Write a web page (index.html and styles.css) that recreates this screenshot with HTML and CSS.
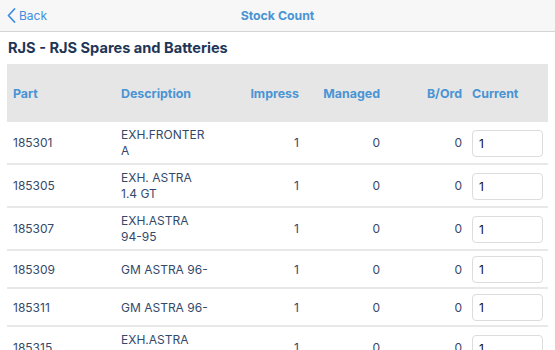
FILE: index.html
```html
<!DOCTYPE html>
<html lang="en">
<head>
  <meta charset="UTF-8">
  <title>Stock Count</title>
  <meta name="viewport" content="width=device-width, initial-scale=1.0">
  <link rel="stylesheet" href="styles.css">
</head>
<body>

<div class="navbar">
  <a href="#" class="back">
    <svg width="9" height="15" viewBox="0 0 9 15"><path d="M7.5 1 L1.5 7.5 L7.5 14" fill="none" stroke="#3f8ee0" stroke-width="1.8" stroke-linecap="round" stroke-linejoin="round"/></svg>
    <span>Back</span>
  </a>
  <div class="title">Stock Count</div>
  <div></div>
</div>

<h2 class="supplier">RJS - RJS Spares and Batteries</h2>

<div class="table-wrap">
  <table class="stock">
    <colgroup>
      <col class="c-part">
      <col class="c-desc">
      <col class="c-impress">
      <col class="c-managed">
      <col class="c-bord">
      <col class="c-current">
    </colgroup>
    <thead>
      <tr>
        <th>Part</th>
        <th>Description</th>
        <th class="num">Impress</th>
        <th class="num">Managed</th>
        <th class="num">B/Ord</th>
        <th class="cur">Current</th>
      </tr>
    </thead>
    <tbody>
      <tr>
        <td>185301</td>
        <td class="desc">EXH.FRONTERA</td>
        <td class="num">1</td>
        <td class="num">0</td>
        <td class="num">0</td>
        <td class="cur"><input type="text" value="1"></td>
      </tr>
      <tr>
        <td>185305</td>
        <td class="desc">EXH. ASTRA 1.4 GT</td>
        <td class="num">1</td>
        <td class="num">0</td>
        <td class="num">0</td>
        <td class="cur"><input type="text" value="1"></td>
      </tr>
      <tr>
        <td>185307</td>
        <td class="desc">EXH.ASTRA 94-95</td>
        <td class="num">1</td>
        <td class="num">0</td>
        <td class="num">0</td>
        <td class="cur"><input type="text" value="1"></td>
      </tr>
      <tr>
        <td>185309</td>
        <td class="desc">GM ASTRA 96-</td>
        <td class="num">1</td>
        <td class="num">0</td>
        <td class="num">0</td>
        <td class="cur"><input type="text" value="1"></td>
      </tr>
      <tr>
        <td>185311</td>
        <td class="desc">GM ASTRA 96-</td>
        <td class="num">1</td>
        <td class="num">0</td>
        <td class="num">0</td>
        <td class="cur"><input type="text" value="1"></td>
      </tr>
      <tr>
        <td>185315</td>
        <td class="desc">EXH.ASTRA 98-00</td>
        <td class="num">1</td>
        <td class="num">0</td>
        <td class="num">0</td>
        <td class="cur"><input type="text" value="1"></td>
      </tr>
    </tbody>
  </table>
</div>

</body>
</html>
```

FILE: styles.css
```css
* { box-sizing: border-box; }
body {
  margin: 0;
  font-family: 'Inter', 'Roboto', sans-serif;
  background: #fff;
  color: #34496a;
  overflow: hidden;
}
.navbar {
  display: grid;
  grid-template-columns: 1fr auto 1fr;
  align-items: center;
  height: 32px;
  background: #f7f7f7;
  border-bottom: 1px solid #d4d4d4;
  padding: 0 7px;
}
.back {
  display: flex;
  align-items: center;
  gap: 3px;
  color: #3f8ee0;
  text-decoration: none;
  font-size: 12px;
}
.title {
  color: #4a94d4;
  font-size: 12.3px;
  font-weight: 700;
}
.supplier {
  margin: 0;
  padding: 7px 8px 7px;
  font-size: 14.6px;
  line-height: 18px;
  font-weight: 700;
  color: #1e3656;
}
.table-wrap {
  padding: 0 7px;
}
.stock {
  width: 541px;
  border-collapse: collapse;
  table-layout: fixed;
  font-size: 12px;
}
.c-part { width: 108px; }
.c-desc { width: 99px; }
.c-impress { width: 91px; }
.c-managed { width: 81px; }
.c-bord { width: 82px; }
.c-current { width: 80px; }
.stock th {
  background: #e6e6e6;
  color: #4a94d4;
  font-size: 12.4px;
  font-weight: 700;
  text-align: left;
  height: 58px;
  padding: 0 6px;
}
.stock td {
  padding: 5px 6px 4px;
  line-height: 16px;
  border-bottom: 2px solid #e8e8e8;
  vertical-align: middle;
}
.stock .desc { overflow-wrap: anywhere; }
.stock .num { text-align: right; }
.stock .cur { padding-left: 4px; padding-right: 5px; }
.stock input {
  width: 71px;
  height: 27px;
  border: 1px solid #dcdcdc;
  border-radius: 4px;
  padding: 0 6px;
  font-family: inherit;
  font-size: 12px;
  color: #111;
  background: #fff;
}
```
